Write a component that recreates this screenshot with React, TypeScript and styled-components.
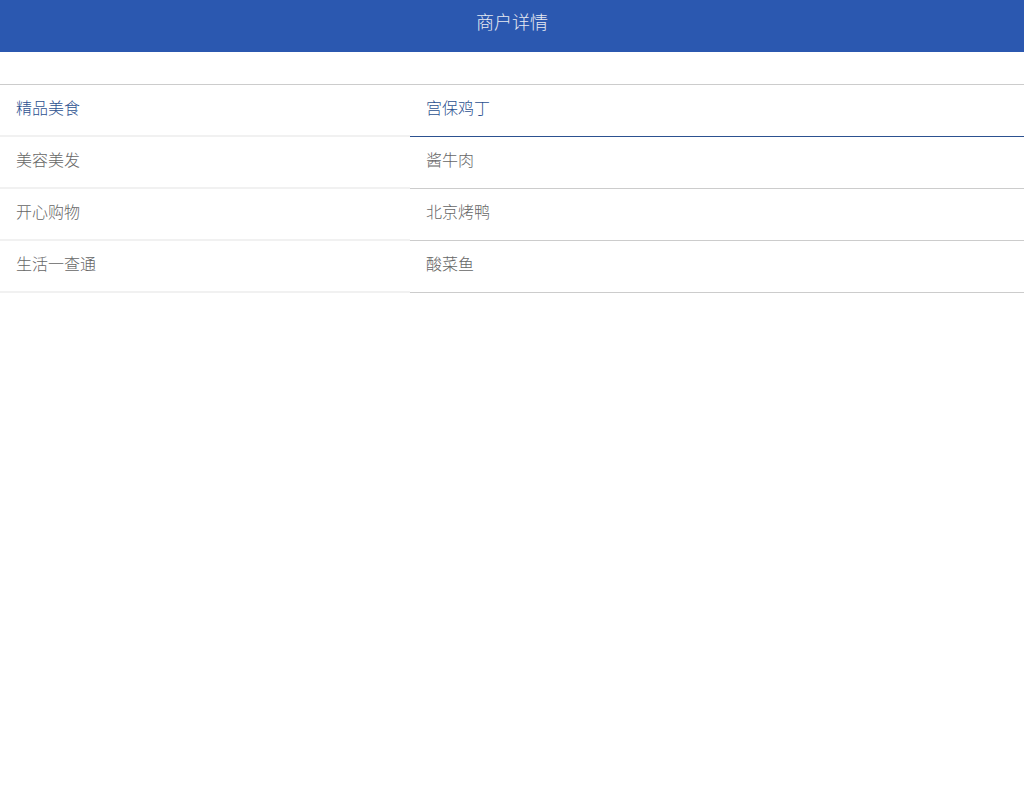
import React, { useState } from "react";
import styled, { createGlobalStyle } from "styled-components";

const Global = createGlobalStyle`
  html, body { margin: 0; padding: 0; background: #fff; }
  body { font-family: "Noto Sans CJK SC", "Noto Sans", sans-serif; font-weight: 300; }
  * { box-sizing: border-box; }
`;

const Header = styled.header`
  height: 52px;
  background: #2b58b0;
  color: #e6e9f2;
  font-size: 18px;
  display: flex;
  align-items: flex-start;
  justify-content: center;
  padding-top: 9px;
  line-height: 24px;
`;

const Body = styled.div`
  margin-top: 32px;
  border-top: 1px solid #cccccc;
  display: grid;
  grid-template-columns: 410px 1fr;
`;

const Column = styled.ul`
  list-style: none;
  margin: 0;
  padding: 0;
`;

const CategoryItem = styled.li<{ $active?: boolean }>`
  height: 52px;
  padding: 0 16px 6px;
  display: flex;
  align-items: center;
  font-size: 16px;
  color: ${(p) => (p.$active ? "#2c5190" : "#666666")};
  border-bottom: 2px solid #f1f1f1;
`;

const DishItem = styled.li<{ $active?: boolean }>`
  height: 52px;
  padding: 0 16px 7px;
  display: flex;
  align-items: center;
  font-size: 16px;
  color: ${(p) => (p.$active ? "#2c5190" : "#666666")};
  border-bottom: 1px solid ${(p) => (p.$active ? "#2c5190" : "#cccccc")};
`;

const categories = ["精品美食", "美容美发", "开心购物", "生活一查通"];
const dishes = ["宫保鸡丁", "酱牛肉", "北京烤鸭", "酸菜鱼"];

export default function App() {
  const [cat, setCat] = useState(0);
  const [dish, setDish] = useState(0);
  return (
    <>
      <Global />
      <Header>商户详情</Header>
      <Body>
        <Column>
          {categories.map((c, i) => (
            <CategoryItem key={c} $active={i === cat} onClick={() => setCat(i)}>
              {c}
            </CategoryItem>
          ))}
        </Column>
        <Column>
          {dishes.map((d, i) => (
            <DishItem key={d} $active={i === dish} onClick={() => setDish(i)}>
              {d}
            </DishItem>
          ))}
        </Column>
      </Body>
    </>
  );
}
